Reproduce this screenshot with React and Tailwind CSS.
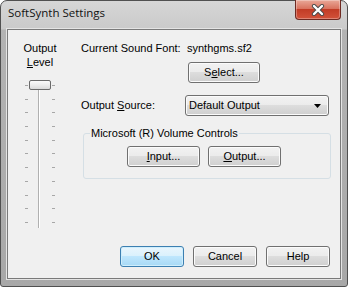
import React from "react";

const face =
  "rounded-[3px] border border-[#707070] bg-[linear-gradient(#f2f2f2,#ebebeb_50%,#dddddd_50%,#cfcfcf)] shadow-[inset_0_0_0_1px_#fbfbfb] leading-none";

const btn = `flex items-center justify-center ${face}`;

const okBtn =
  "flex items-center justify-center rounded-[3px] border border-[#3c7fb1] bg-[linear-gradient(#eaf6fd,#d9f0fc_50%,#bee6fd_50%,#a7d9f5)] shadow-[inset_0_0_0_1px_#cfeefc] leading-none";

function CloseButton() {
  return (
    <div className="-mt-px flex h-[20px] w-[46px] items-center justify-center rounded-b-[4px] border border-t-0 border-[#6e2a22] bg-[linear-gradient(#e9a898,#d9735f_45%,#c23c26_50%,#d2523a)] shadow-[inset_0_0_0_1px_rgba(255,255,255,0.3)]">
      <svg width="14" height="12" viewBox="0 0 14 12">
        <path d="M3 2 L11 10 M11 2 L3 10" stroke="#4a4a4a" strokeWidth="4.2" strokeLinecap="round" />
        <path d="M3 2 L11 10 M11 2 L3 10" stroke="#ffffff" strokeWidth="2.4" strokeLinecap="round" />
      </svg>
    </div>
  );
}

function Slider() {
  const ticks = Array.from({ length: 11 });
  return (
    <div className="relative mt-[11px] h-[148px] w-[32px]">
      {/* tick marks */}
      <div className="mt-[5px] flex h-[138px] flex-col justify-between">
        {ticks.map((_, i) => (
          <div key={i} className="flex justify-between px-[1px]">
            <div className="h-px w-[3px] bg-[#a7a7a7]" />
            <div className="h-px w-[3px] bg-[#a7a7a7]" />
          </div>
        ))}
      </div>
      {/* track */}
      <div className="absolute left-[14px] top-[9px] bottom-0 w-[2px] border-l border-[#b0b0b0] bg-white" />
      {/* thumb */}
      <div className="absolute left-[5px] top-0 h-[10px] w-[22px] rounded-[2px] border border-[#6a6a6a] bg-[linear-gradient(#fafafa,#ececec_50%,#d9d9d9)]" />
    </div>
  );
}

export default function App() {
  return (
    <div className="h-[287px] w-[348px] bg-white">
      <div className="flex h-[287px] w-[348px] flex-col rounded-t-[7px] rounded-b-[3px] border border-[#505050] bg-[linear-gradient(180deg,#d6d6d6_0px,#cacaca_28px,#b3b3b3_29px,#a8a8a8)] font-['Liberation_Sans',sans-serif] text-[11px] text-black">
        {/* title bar */}
        <div className="flex h-[28px] items-start justify-between pl-[7px] pr-[6px]">
          <span className="mt-[4px] font-['Open_Sans',sans-serif] text-[11.5px] leading-[16px] text-[#111]">
            SoftSynth Settings
          </span>
          <CloseButton />
        </div>

        {/* client area */}
        <div className="mx-[6px] mb-[7px] flex flex-1 flex-col border border-[#7a7a7a] bg-[#f0f0f0] shadow-[0_0_0_1px_#e4e4e4]">
          <div className="flex">
            {/* output level */}
            <div className="flex w-[64px] flex-col items-center pt-[11px] leading-[14px]">
              <span>Output</span>
              <span>
                <u>L</u>evel
              </span>
              <Slider />
            </div>

            {/* settings */}
            <div className="flex flex-1 flex-col pl-[9px] pt-[11px]">
              <div className="flex leading-[14px]">
                <span className="w-[106px]">Current Sound Font:</span>
                <span>synthgms.sf2</span>
              </div>

              <button className={`${btn} ml-[107px] mt-[7px] h-[21px] w-[72px]`}>
                S<u>e</u>lect...
              </button>

              <div className="mt-[12px] flex h-[21px] items-center">
                <span className="w-[104px]">
                  Output <u>S</u>ource:
                </span>
                <div className={`${face} flex h-[21px] w-[144px] items-center justify-between pl-[3px] pr-[7px]`}>
                  <span>Default Output</span>
                  <svg width="7" height="4" viewBox="0 0 7 4">
                    <path d="M0 0 H7 L3.5 4 Z" fill="#000" />
                  </svg>
                </div>
              </div>

              <div className="relative ml-[2px] mt-[17px] h-[46px] w-[248px] rounded-[3px] border border-[#d5dfe5]">
                <span className="absolute -top-[8px] left-[6px] bg-[#f0f0f0] px-[1px] leading-[14px]">
                  Microsoft (R) Volume Controls
                </span>
                <div className="flex gap-[8px] pl-[43px] pt-[12px]">
                  <button className={`${btn} h-[21px] w-[73px]`}>
                    <u>I</u>nput...
                  </button>
                  <button className={`${btn} h-[21px] w-[73px]`}>
                    <u>O</u>utput...
                  </button>
                </div>
              </div>
            </div>
          </div>

          {/* dialog buttons */}
          <div className="mt-auto flex justify-end gap-[9px] pb-[11px] pr-[10px]">
            <button className={`${okBtn} h-[21px] w-[64px]`}>OK</button>
            <button className={`${btn} h-[21px] w-[64px]`}>Cancel</button>
            <button className={`${btn} h-[21px] w-[64px]`}>Help</button>
          </div>
        </div>
      </div>
    </div>
  );
}
